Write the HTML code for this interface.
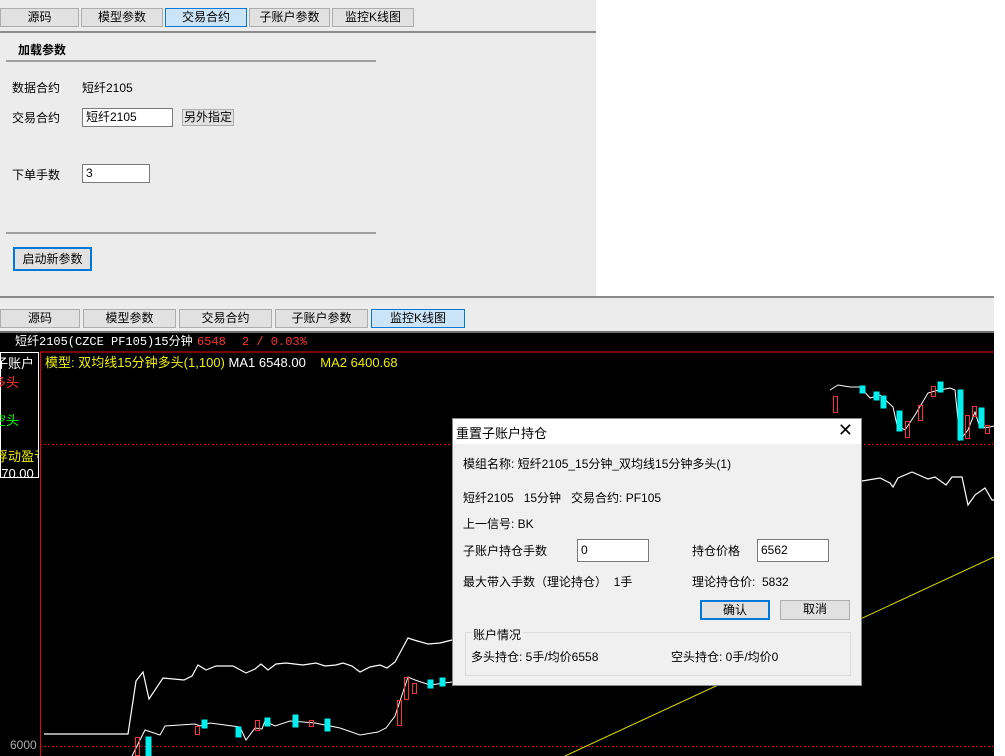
<!DOCTYPE html>
<html><head><meta charset="utf-8"><style>
*{margin:0;padding:0;box-sizing:border-box}
body{width:1005px;height:756px;position:relative;background:#fff;overflow:hidden;font-family:"Liberation Sans","Noto Sans CJK SC",sans-serif;font-size:12px;color:#000}
.abs{position:absolute}
.tab{position:absolute;height:19px;background:#e1e1e1;border:1px solid #adadad;text-align:center;line-height:17px;font-size:12px}
.tab.sel{background:#cce4f7;border:1px solid #0078d7}
.inp{position:absolute;background:#fff;border:1px solid #7a7a7a;height:19px;line-height:17px;padding-left:3px}
.btn{position:absolute;background:#e1e1e1;border:1px solid #adadad;text-align:center;line-height:17px}
</style></head><body>
<div class="abs" style="left:0;top:0;width:596px;height:296px;background:#ececec"></div>
<div class="tab" style="left:0;top:8px;width:79px">源码</div>
<div class="tab" style="left:81px;top:8px;width:82px">模型参数</div>
<div class="tab sel" style="left:165px;top:8px;width:82px">交易合约</div>
<div class="tab" style="left:249px;top:8px;width:81px">子账户参数</div>
<div class="tab" style="left:332px;top:8px;width:82px">监控K线图</div>
<div class="abs" style="left:0;top:31px;width:596px;height:2px;background:#8a8a8a"></div>
<div class="abs" style="left:18px;top:41px;font-weight:bold;font-size:12px">加载参数</div>
<div class="abs" style="left:6px;top:60px;width:370px;height:2px;background:#a0a0a0"></div>
<div class="abs" style="left:12px;top:79px">数据合约</div>
<div class="abs" style="left:82px;top:79px">短纤2105</div>
<div class="abs" style="left:12px;top:109px">交易合约</div>
<div class="inp" style="left:82px;top:108px;width:91px">短纤2105</div>
<div class="btn" style="left:182px;top:109px;width:52px;height:17px;line-height:15px">另外指定</div>
<div class="abs" style="left:12px;top:166px">下单手数</div>
<div class="inp" style="left:82px;top:164px;width:68px">3</div>
<div class="abs" style="left:6px;top:232px;width:370px;height:2px;background:#a0a0a0"></div>
<div class="btn" style="left:13px;top:247px;width:79px;height:24px;line-height:21px;border:2px solid #0078d7">启动新参数</div>
<div class="abs" style="left:0;top:296px;width:994px;height:37px;background:#ececec;border-top:2px solid #8a8a8a;border-bottom:2px solid #707070"></div>
<div class="tab" style="left:0;top:309px;width:80px">源码</div>
<div class="tab" style="left:83px;top:309px;width:93px">模型参数</div>
<div class="tab" style="left:179px;top:309px;width:93px">交易合约</div>
<div class="tab" style="left:275px;top:309px;width:93px">子账户参数</div>
<div class="tab sel" style="left:371px;top:309px;width:94px">监控K线图</div>
<div class="abs" style="left:0;top:333px;width:994px;height:423px;background:#000"></div>
<svg class="abs" style="left:0;top:333px" width="994" height="423" viewBox="0 333 994 423">
<line x1="40" y1="352" x2="994" y2="352" stroke="#e00" stroke-width="1"/>
<line x1="40.5" y1="352" x2="40.5" y2="756" stroke="#e00"/>
<line x1="40" y1="444.5" x2="994" y2="444.5" stroke="#c00" stroke-dasharray="2,2"/>
<line x1="40" y1="746.5" x2="994" y2="746.5" stroke="#c00" stroke-dasharray="2,2"/>
<rect x="0.5" y="352.5" width="38" height="125" fill="none" stroke="#fff"/>
<polyline fill="none" stroke="#dd0" stroke-width="1" points="565,756 994,557"/>
<polyline fill="none" stroke="#fff" stroke-width="1.2" points="44,734 128,734 136,681 143,672 149,699 163,678 184,680 192,676 198,665 206,670 216,666 233,666 246,673 255,669 261,664 268,670 276,664 286,663 303,665 316,663 325,666 336,665 343,663 352,666 360,672 370,667 380,665 387,668 395,662 408,638 414,640 428,644 440,643 452,640"/>
<polyline fill="none" stroke="#fff" stroke-width="1.2" points="862,481 880,478 890,483 893,487 898,478 912,472 928,479 935,477 946,485 952,477 962,477 968,505 975,495 985,488 992,500 994,500"/>
<polyline fill="none" stroke="#fff" stroke-width="1" points="132,756 140,740 145,730 160,735 165,726 195,724 200,726 210,723 240,727 246,740 255,728 262,729 265,721 275,726 290,721 303,722 315,723 325,725 340,728 360,735 378,732 386,728 395,716 408,677 415,680 430,685 452,682"/>
<polyline fill="none" stroke="#fff" stroke-width="1" points="830,390 838,385 850,387 860,387 870,398 880,395 893,407 897,425 905,430 915,415 928,393 935,391 950,388 955,390 960,440 968,430 975,412 980,428 990,427 994,426"/>
<g fill="#0ee" stroke="#0ee">
<rect x="146" y="737" width="5" height="19"/><rect x="202" y="720" width="5" height="8"/><rect x="236" y="727" width="5" height="10"/><rect x="293" y="715" width="5" height="12"/><rect x="265" y="718" width="5" height="8"/><rect x="325" y="719" width="5" height="12"/><rect x="428" y="680" width="5" height="8"/><rect x="440" y="678" width="5" height="8"/>
<rect x="860" y="386" width="5" height="7"/><rect x="874" y="392" width="5" height="8"/><rect x="881" y="396" width="5" height="12"/><rect x="897" y="411" width="5" height="20"/><rect x="958" y="390" width="5" height="50"/><rect x="979" y="408" width="5" height="20"/><rect x="938" y="382" width="5" height="10"/>
</g>
<g fill="none" stroke="#f33">
<rect x="135.5" y="737.5" width="4" height="18"/><rect x="195.5" y="726.5" width="4" height="8"/><rect x="255.5" y="720.5" width="4" height="10"/><rect x="309.5" y="720.5" width="4" height="6"/><rect x="397.5" y="700.5" width="4" height="25"/><rect x="404.5" y="677.5" width="4" height="22"/><rect x="412.5" y="683.5" width="4" height="10"/>
<rect x="833.5" y="396.5" width="4" height="16"/><rect x="905.5" y="421.5" width="4" height="16"/><rect x="918.5" y="405.5" width="4" height="15"/><rect x="931.5" y="386.5" width="4" height="10"/><rect x="965.5" y="415.5" width="4" height="23"/><rect x="972.5" y="406.5" width="4" height="10"/><rect x="985.5" y="425.5" width="4" height="8"/>
</g>
</svg>
<div class="abs" style="left:0;top:333px;width:994px;height:18px;font-family:'Liberation Mono','Noto Sans CJK SC',monospace;font-size:12px;line-height:18px">
<span class="abs" style="left:15px;color:#fff">短纤2105(CZCE PF105)15分钟</span>
<span class="abs" style="left:197px;color:#f33">6548</span>
<span class="abs" style="left:242px;color:#f33">2 / 0.03%</span>
</div>
<div class="abs" style="left:45px;top:352px;font-size:13px;color:#ee0;white-space:nowrap">模型: 双均线15分钟多头(1,100) <span style="color:#fff">MA1 6548.00</span> &nbsp; &nbsp;<span style="color:#ee0">MA2 6400.68</span></div>
<div class="abs" style="left:0;top:353px;width:38px;overflow:hidden;white-space:nowrap;font-size:13px">
<div style="margin-left:-5px;color:#fff;height:19px">子账户</div>
<div style="margin-left:-7px;color:#f33;height:38px">多头</div>
<div style="margin-left:-7px;color:#0f0;height:36px">空头</div>
<div style="margin-left:-5px;color:#ee0;height:20px">浮动盈亏</div>
<div style="margin-left:-6px;color:#fff">170.00</div>
</div>
<div class="abs" style="left:10px;top:738px;color:#aaa;font-size:12px">6000</div>
<div class="abs" style="left:452px;top:418px;width:410px;height:268px;background:#f0f0f0;border:1px solid #888">
<div style="height:25px;background:#fff;position:relative"><span class="abs" style="left:3px;top:4px;font-size:13px">重置子账户持仓</span><span class="abs" style="right:8px;top:0px;font-size:18px;line-height:22px">✕</span></div>
<div class="abs" style="left:10px;top:36px">模组名称: 短纤2105_15分钟_双均线15分钟多头(1)</div>
<div class="abs" style="left:10px;top:70px">短纤2105 &nbsp; 15分钟 &nbsp; 交易合约: PF105</div>
<div class="abs" style="left:10px;top:96px">上一信号: BK</div>
<div class="abs" style="left:10px;top:123px">子账户持仓手数</div>
<div class="inp" style="left:124px;top:120px;width:72px;height:23px;line-height:20px">0</div>
<div class="abs" style="left:239px;top:123px">持仓价格</div>
<div class="inp" style="left:304px;top:120px;width:72px;height:23px;line-height:20px">6562</div>
<div class="abs" style="left:10px;top:154px">最大带入手数（理论持仓） &nbsp;1手</div>
<div class="abs" style="left:239px;top:154px">理论持仓价: &nbsp;5832</div>
<div class="btn" style="left:247px;top:181px;width:70px;height:20px;border:2px solid #0078d7">确认</div>
<div class="btn" style="left:327px;top:181px;width:70px;height:20px">取消</div>
<div class="abs" style="left:12px;top:213px;width:386px;height:44px;border:1px solid #dcdcdc"></div>
<div class="abs" style="left:18px;top:207px;background:#f0f0f0;padding:0 2px">账户情况</div>
<div class="abs" style="left:18px;top:229px">多头持仓: 5手/均价6558</div>
<div class="abs" style="left:218px;top:229px">空头持仓: 0手/均价0</div>
</div>
</body></html>
